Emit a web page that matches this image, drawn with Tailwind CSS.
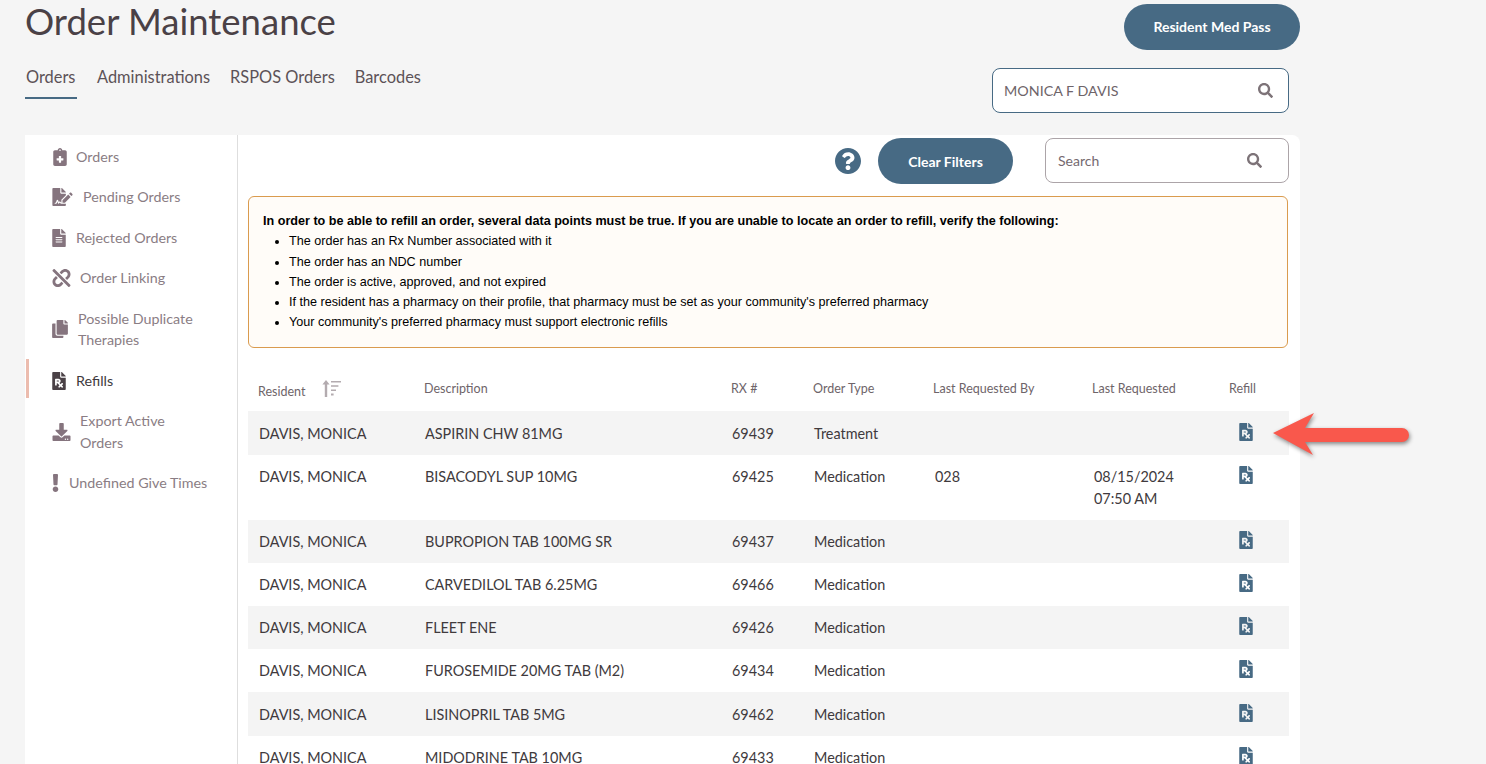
<!DOCTYPE html>
<html lang="en">
<head>
    <meta charset="UTF-8">
    <meta name="viewport" content="width=device-width, initial-scale=1.0">
    <title>Order Maintenance</title>
    <script src="https://cdn.jsdelivr.net/npm/@tailwindcss/browser@4"></script>
</head>
<body class="h-[764px] overflow-hidden bg-[#f5f5f5] font-['Lato',sans-serif] relative">

    <svg class="hidden">
        <symbol id="rx" viewBox="0 0 384 512"><path d="M224 136V0H24C10.7 0 0 10.7 0 24v464c0 13.3 10.7 24 24 24h336c13.3 0 24-10.7 24-24V160H248c-13.2 0-24-10.8-24-24zm68.53 179.48l11.31 11.31c6.25 6.25 6.25 16.38 0 22.63l-29.9 29.9L304 409.38c6.25 6.25 6.25 16.38 0 22.63l-11.31 11.31c-6.25 6.25-16.38 6.25-22.63 0L240 413.25l-30.06 30.06c-6.25 6.25-16.38 6.25-22.63 0L176 432c-6.25-6.25-6.25-16.38 0-22.63l30.06-30.06L146.74 320H128v48c0 8.84-7.16 16-16 16H96c-8.84 0-16-7.16-16-16V208c0-8.84 7.16-16 16-16h80c35.35 0 64 28.65 64 64 0 24.22-13.62 45.05-33.46 55.92L240 345.38l29.9-29.9c6.25-6.25 16.38-6.25 22.63 0zM176 272h-48v-32h48c8.82 0 16 7.18 16 16s-7.18 16-16 16zm208-150.1v6.1H256V0h6.1c6.4 0 12.5 2.5 17 7l97.9 98c4.5 4.5 7 10.6 7 16.9z"/></symbol>
        <symbol id="search" viewBox="0 0 512 512"><path d="M505 442.7L405.3 343c-4.5-4.5-10.6-7-17-7H372c27.6-35.3 44-79.7 44-128C416 93.1 322.9 0 208 0S0 93.1 0 208s93.1 208 208 208c48.3 0 92.7-16.4 128-44v16.3c0 6.4 2.5 12.5 7 17l99.7 99.7c9.4 9.4 24.6 9.4 33.9 0l28.3-28.3c9.4-9.4 9.4-24.6.1-34zM208 336c-70.7 0-128-57.2-128-128 0-70.7 57.2-128 128-128 70.7 0 128 57.2 128 128 0 70.7-57.2 128-128 128z"/></symbol>
    </svg>

    <div class="ml-[25px] w-[1275px]">

        <!-- Header -->
        <div class="flex justify-between h-[135px]">
            <div>
                <h1 class="text-[36.5px] leading-[43px] text-[#4a4146]">Order Maintenance</h1>
                <nav class="mt-[23px] flex gap-[20px] text-[16.4px] leading-[22px] text-[#5c5257]">
                    <a class="h-[33px] border-b-2 border-[#476a84] w-[52px] pl-px">Orders</a>
                    <a>Administrations</a>
                    <a>RSPOS Orders</a>
                    <a>Barcodes</a>
                </nav>
            </div>
            <div class="flex flex-col items-end">
                <button class="mt-[4px] w-[176px] h-[46px] pb-[2px] rounded-full bg-[#476a84] text-white text-[14px] font-bold">Resident Med Pass</button>
                <div class="mt-[18px] mr-[11px] w-[297px] h-[45px] border border-[#476a84] rounded-lg bg-white flex items-center justify-between pl-[11px] pr-[15px] text-[14.3px] text-[#6e6469]">
                    <span>MONICA F DAVIS</span>
                    <svg class="w-[15px] h-[15px] fill-[#7d7378]"><use href="#search"/></svg>
                </div>
            </div>
        </div>

        <!-- Panel -->
        <div class="flex bg-white rounded-tr-lg h-[629px]">

            <!-- Sidebar -->
            <aside class="w-[213px] shrink-0 border-r border-[#dedede] text-[14.3px] leading-[21.5px] text-[#8a7d84] pt-[2px] pl-[27px]">
                <a class="flex items-center h-[40px]">
                    <svg class="w-[16px] h-[18px] fill-[#85747e] mr-[8px]" viewBox="0 0 384 512"><path d="M336 64h-80c0-35.3-28.7-64-64-64s-64 28.7-64 64H48C21.5 64 0 85.5 0 112v352c0 26.5 21.5 48 48 48h288c26.5 0 48-21.5 48-48V112c0-26.5-21.5-48-48-48zM192 40c13.3 0 24 10.7 24 24s-10.7 24-24 24-24-10.7-24-24 10.7-24 24-24zm96 304c0 4.4-3.6 8-8 8h-56v56c0 4.4-3.6 8-8 8h-48c-4.4 0-8-3.6-8-8v-56h-56c-4.4 0-8-3.6-8-8v-48c0-4.4 3.6-8 8-8h56v-56c0-4.4 3.6-8 8-8h48c4.4 0 8 3.6 8 8v56h56c4.4 0 8 3.6 8 8v48z"/></svg>
                    <span>Orders</span>
                </a>
                <a class="flex items-center h-[40px]">
                    <svg class="w-[21px] h-[18px] fill-[#85747e] mr-[10px]" viewBox="0 0 576 512"><path d="M218.17 424.14c-2.95-5.92-8.09-6.52-10.17-6.52s-7.22.59-10.02 6.19l-7.67 15.34c-6.37 12.78-25.03 11.37-29.48-2.09L144 386.59l-10.61 31.88c-5.89 17.66-22.38 29.53-41 29.53H80c-8.84 0-16-7.16-16-16s7.16-16 16-16h12.39c4.83 0 9.11-3.08 10.64-7.66l18.19-54.64c3.3-9.81 12.44-16.41 22.78-16.41s19.48 6.59 22.77 16.41l13.88 41.64c19.75-16.19 54.06-9.7 66 14.16 1.89 3.78 5.49 5.95 9.36 6.26v-82.12l128-127.09V160H248c-13.2 0-24-10.8-24-24V0H24C10.7 0 0 10.7 0 24v464c0 13.3 10.7 24 24 24h336c13.3 0 24-10.7 24-24v-40l-128-.11c-16.12-.31-30.58-9.28-37.83-23.75zM384 121.9c0-6.3-2.5-12.4-7-16.9L279.1 7c-4.5-4.5-10.6-7-17-7H256v128h128v-6.1zm-96 225.06V416h68.99l161.68-162.78-67.88-67.88L288 346.96zm280.54-179.63l-31.87-31.87c-9.94-9.94-26.07-9.94-36.01 0l-27.25 27.25 67.88 67.88 27.25-27.25c9.95-9.94 9.95-26.07 0-36.01z"/></svg>
                    <span>Pending Orders</span>
                </a>
                <a class="flex items-center h-[41px]">
                    <svg class="w-[14px] h-[18px] fill-[#85747e] mr-[10px]" viewBox="0 0 384 512"><path d="M224 136V0H24C10.7 0 0 10.7 0 24v464c0 13.3 10.7 24 24 24h336c13.3 0 24-10.7 24-24V160H248c-13.2 0-24-10.8-24-24zm64 236c0 6.6-5.4 12-12 12H108c-6.6 0-12-5.4-12-12v-8c0-6.6 5.4-12 12-12h168c6.6 0 12 5.4 12 12v8zm0-64c0 6.6-5.4 12-12 12H108c-6.6 0-12-5.4-12-12v-8c0-6.6 5.4-12 12-12h168c6.6 0 12 5.4 12 12v8zm0-72v8c0 6.6-5.4 12-12 12H108c-6.6 0-12-5.4-12-12v-8c0-6.6 5.4-12 12-12h168c6.6 0 12 5.4 12 12zm96-114.1v6.1H256V0h6.1c6.4 0 12.5 2.5 17 7l97.9 98c4.5 4.5 7 10.6 7 16.9z"/></svg>
                    <span>Rejected Orders</span>
                </a>
                <a class="flex items-center h-[40px]">
                    <svg class="w-[19px] h-[18px] fill-[#85747e] mr-[9px]" viewBox="0 0 512 512"><path d="M304.083 405.907c4.686 4.686 4.686 12.284 0 16.971l-44.674 44.674c-59.263 59.262-155.693 59.266-214.961 0-59.264-59.265-59.264-155.696 0-214.96l44.675-44.675c4.686-4.686 12.284-4.686 16.971 0l39.598 39.598c4.686 4.686 4.686 12.284 0 16.971l-44.675 44.674c-28.072 28.073-28.072 73.75 0 101.823 28.072 28.072 73.75 28.073 101.824 0l44.674-44.674c4.686-4.686 12.284-4.686 16.971 0l39.597 39.598zm-56.568-260.216c4.686 4.686 12.284 4.686 16.971 0l44.674-44.674c28.072-28.075 73.75-28.073 101.824 0 28.072 28.073 28.072 73.75 0 101.823l-44.675 44.674c-4.686 4.686-4.686 12.284 0 16.971l39.598 39.598c4.686 4.686 12.284 4.686 16.971 0l44.675-44.675c59.265-59.265 59.265-155.695 0-214.96-59.266-59.264-155.695-59.264-214.961 0l-44.674 44.674c-4.686 4.686-4.686 12.284 0 16.971l39.597 39.598zm234.828 359.28l22.627-22.627c9.373-9.373 9.373-24.569 0-33.941L63.598 7.029c-9.373-9.373-24.569-9.373-33.941 0L7.029 29.657c-9.373 9.373-9.373 24.569 0 33.941l441.373 441.373c9.373 9.372 24.569 9.372 33.941 0z"/></svg>
                    <span>Order Linking</span>
                </a>
                <a class="flex items-center h-[62px]">
                    <svg class="w-[16px] h-[18px] fill-[#85747e] mr-[10px]" viewBox="0 0 448 512"><path d="M320 448v40c0 13.255-10.745 24-24 24H24c-13.255 0-24-10.745-24-24V120c0-13.255 10.745-24 24-24h72v296c0 30.879 25.121 56 56 56h168zm0-344V0H152c-13.255 0-24 10.745-24 24v368c0 13.255 10.745 24 24 24h272c13.255 0 24-10.745 24-24V128H344c-13.2 0-24-10.8-24-24zm120.971-31.029L375.029 7.029A24 24 0 0 0 358.059 0H352v96h96v-6.059a24 24 0 0 0-7.029-16.97z"/></svg>
                    <span>Possible Duplicate<br>Therapies</span>
                </a>
                <a class="relative flex items-center h-[41px] text-[#403a3d]">
                    <span class="absolute left-[-26px] top-[-1px] w-[3px] h-[39px] bg-[#ecbcae]"></span>
                    <svg class="w-[14px] h-[18px] fill-[#4a4146] mr-[10px]"><use href="#rx"/></svg>
                    <span>Refills</span>
                </a>
                <a class="flex items-center h-[62px] leading-[22px]">
                    <svg class="w-[19px] h-[18px] fill-[#85747e] mr-[9px]" viewBox="0 0 512 512"><path d="M216 0h80c13.3 0 24 10.7 24 24v168h87.7c17.8 0 26.7 21.5 14.1 34.1L269.7 378.3c-7.5 7.5-19.8 7.5-27.3 0L90.1 226.1c-12.6-12.6-3.7-34.1 14.1-34.1H192V24c0-13.3 10.7-24 24-24zm296 376v112c0 13.3-10.7 24-24 24H24c-13.3 0-24-10.7-24-24V376c0-13.3 10.7-24 24-24h146.7l49 49c20.1 20.1 52.5 20.1 72.6 0l49-49H488c13.3 0 24 10.7 24 24zm-124 88c0-11-9-20-20-20s-20 9-20 20 9 20 20 20 20-9 20-20zm64 0c0-11-9-20-20-20s-20 9-20 20 9 20 20 20 20-9 20-20z"/></svg>
                    <span>Export Active<br>Orders</span>
                </a>
                <a class="flex items-center h-[40px]">
                    <svg class="w-[7px] h-[18px] fill-[#85747e] mr-[10px]" viewBox="0 0 192 512"><path d="M176 432c0 44.112-35.888 80-80 80s-80-35.888-80-80 35.888-80 80-80 80 35.888 80 80zM25.26 25.199l13.6 272C39.499 309.972 50.041 320 62.83 320h66.34c12.789 0 23.331-10.028 23.97-22.801l13.6-272C167.425 11.49 156.496 0 142.77 0H49.23C35.504 0 24.575 11.49 25.26 25.199z"/></svg>
                    <span>Undefined Give Times</span>
                </a>
            </aside>

            <!-- Main -->
            <main class="flex-1 pl-[10px] pr-[10px] pt-[3px]">
                <div class="flex items-start justify-end h-[46px] pr-px">
                    <svg class="w-[26px] h-[26px] mt-[10px] fill-[#476a84] mr-[17px]" viewBox="8 8 496 496"><path d="M504 256c0 136.997-111.043 248-248 248S8 392.997 8 256C8 119.083 119.043 8 256 8s248 111.083 248 248zM262.655 90c-54.497 0-89.255 22.957-116.549 63.758-3.536 5.286-2.353 12.415 2.715 16.258l34.699 26.31c5.205 3.947 12.621 3.008 16.665-2.122 17.864-22.658 30.113-35.797 57.303-35.797 20.429 0 45.698 13.148 45.698 32.958 0 14.976-12.363 22.667-32.534 33.976C247.128 238.528 216 254.941 216 296v4c0 6.627 5.373 12 12 12h56c6.627 0 12-5.373 12-12v-1.333c0-28.462 83.186-29.647 83.186-106.667 0-58.002-60.165-102-116.531-102zM256 338c-25.365 0-46 20.635-46 46 0 25.364 20.635 46 46 46s46-20.636 46-46c0-25.365-20.635-46-46-46z"/></svg>
                    <button class="w-[135px] h-[46px] rounded-full bg-[#476a84] text-white text-[14px] font-bold mr-[32px]">Clear Filters</button>
                    <div class="w-[244px] h-[45px] border border-[#aca4a8] rounded-lg flex items-center justify-between pl-[12px] pr-[26px] text-[14px] text-[#75696f]">
                        <span>Search</span>
                        <svg class="w-[15px] h-[15px] fill-[#7d7378]"><use href="#search"/></svg>
                    </div>
                </div>

                <!-- Notice -->
                <div class="mt-[12px] w-[1040px] h-[152px] border border-[#da9b4e] rounded-md bg-[#fffcf8] pl-[14px] pt-[14px] font-['Liberation_Sans',sans-serif] text-[12.6px] leading-[20.3px] text-black">
                    <p class="font-bold">In order to be able to refill an order, several data points must be true. If you are unable to locate an order to refill, verify the following:</p>
                    <ul class="list-disc pl-[26px]">
                        <li>The order has an Rx Number associated with it</li>
                        <li>The order has an NDC number</li>
                        <li>The order is active, approved, and not expired</li>
                        <li>If the resident has a pharmacy on their profile, that pharmacy must be set as your community's preferred pharmacy</li>
                        <li>Your community's preferred pharmacy must support electronic refills</li>
                    </ul>
                </div>

                <!-- Table -->
                <div class="mt-[20px] w-[1041px] text-[14.4px] leading-[22px] text-[#403a3d]">
                    <div class="grid grid-cols-[166px_307px_82px_120px_159px_137px_1fr] h-[43px] items-center pl-[10px] pb-[2px] text-[12.5px] text-[#6e6469]">
                        <div class="flex items-center pt-[7px]"><span>Resident</span>
                            <svg class="ml-[17px] mt-[-7px] w-[19px] h-[17px] fill-[#b3abaf]" viewBox="0 0 19 17"><path d="M4 0l3.6 4.6H5.2V17H2.8V4.6H.4zM9 1h10v1.6H9zM9 5.2h7.4v1.6H9zM9 9.4h5v1.6H9zM9 13.6h2.6v1.8H9z"/></svg>
                        </div>
                        <div>Description</div>
                        <div>RX #</div>
                        <div>Order Type</div>
                        <div>Last Requested By</div>
                        <div>Last Requested</div>
                        <div>Refill</div>
                    </div>

                    <div class="grid grid-cols-[166px_307px_82px_121px_159px_145px_1fr] h-[44px] pl-[11px] pt-[12px] bg-[#f4f4f4]">
                        <div>DAVIS, MONICA</div><div>ASPIRIN CHW 81MG</div><div>69439</div><div>Treatment</div><div></div><div></div>
                        <svg class="w-[14px] h-[18px] fill-[#476a84]"><use href="#rx"/></svg>
                    </div>
                    <div class="grid grid-cols-[166px_307px_82px_121px_159px_145px_1fr] h-[65px] pl-[11px] pt-[11px]">
                        <div>DAVIS, MONICA</div><div>BISACODYL SUP 10MG</div><div>69425</div><div>Medication</div><div>028</div><div>08/15/2024<br>07:50 AM</div>
                        <svg class="w-[14px] h-[18px] fill-[#476a84]"><use href="#rx"/></svg>
                    </div>
                    <div class="grid grid-cols-[166px_307px_82px_121px_159px_145px_1fr] h-[43px] pl-[11px] pt-[11px] bg-[#f4f4f4]">
                        <div>DAVIS, MONICA</div><div>BUPROPION TAB 100MG SR</div><div>69437</div><div>Medication</div><div></div><div></div>
                        <svg class="w-[14px] h-[18px] fill-[#476a84]"><use href="#rx"/></svg>
                    </div>
                    <div class="grid grid-cols-[166px_307px_82px_121px_159px_145px_1fr] h-[43px] pl-[11px] pt-[11px]">
                        <div>DAVIS, MONICA</div><div>CARVEDILOL TAB 6.25MG</div><div>69466</div><div>Medication</div><div></div><div></div>
                        <svg class="w-[14px] h-[18px] fill-[#476a84]"><use href="#rx"/></svg>
                    </div>
                    <div class="grid grid-cols-[166px_307px_82px_121px_159px_145px_1fr] h-[43px] pl-[11px] pt-[11px] bg-[#f4f4f4]">
                        <div>DAVIS, MONICA</div><div>FLEET ENE</div><div>69426</div><div>Medication</div><div></div><div></div>
                        <svg class="w-[14px] h-[18px] fill-[#476a84]"><use href="#rx"/></svg>
                    </div>
                    <div class="grid grid-cols-[166px_307px_82px_121px_159px_145px_1fr] h-[43px] pl-[11px] pt-[11px]">
                        <div>DAVIS, MONICA</div><div>FUROSEMIDE 20MG TAB (M2)</div><div>69434</div><div>Medication</div><div></div><div></div>
                        <svg class="w-[14px] h-[18px] fill-[#476a84]"><use href="#rx"/></svg>
                    </div>
                    <div class="grid grid-cols-[166px_307px_82px_121px_159px_145px_1fr] h-[44px] pl-[11px] pt-[12px] bg-[#f4f4f4]">
                        <div>DAVIS, MONICA</div><div>LISINOPRIL TAB 5MG</div><div>69462</div><div>Medication</div><div></div><div></div>
                        <svg class="w-[14px] h-[18px] fill-[#476a84]"><use href="#rx"/></svg>
                    </div>
                    <div class="grid grid-cols-[166px_307px_82px_121px_159px_145px_1fr] h-[43px] pl-[11px] pt-[11px]">
                        <div>DAVIS, MONICA</div><div>MIDODRINE TAB 10MG</div><div>69433</div><div>Medication</div><div></div><div></div>
                        <svg class="w-[14px] h-[18px] fill-[#476a84]"><use href="#rx"/></svg>
                    </div>
                </div>
            </main>
        </div>
    </div>

    <!-- Annotation arrow -->
    <svg class="absolute left-[1265px] top-[405px] w-[155px] h-[60px] drop-shadow-[1px_2px_2px_rgba(0,0,0,0.45)]" viewBox="1265 405 155 60">
        <path fill="#f9584c" d="M1273 433L1314 413L1305 428H1402a7 7 0 0 1 0 14H1305L1313 455Z"/>
    </svg>

</body>
</html>
